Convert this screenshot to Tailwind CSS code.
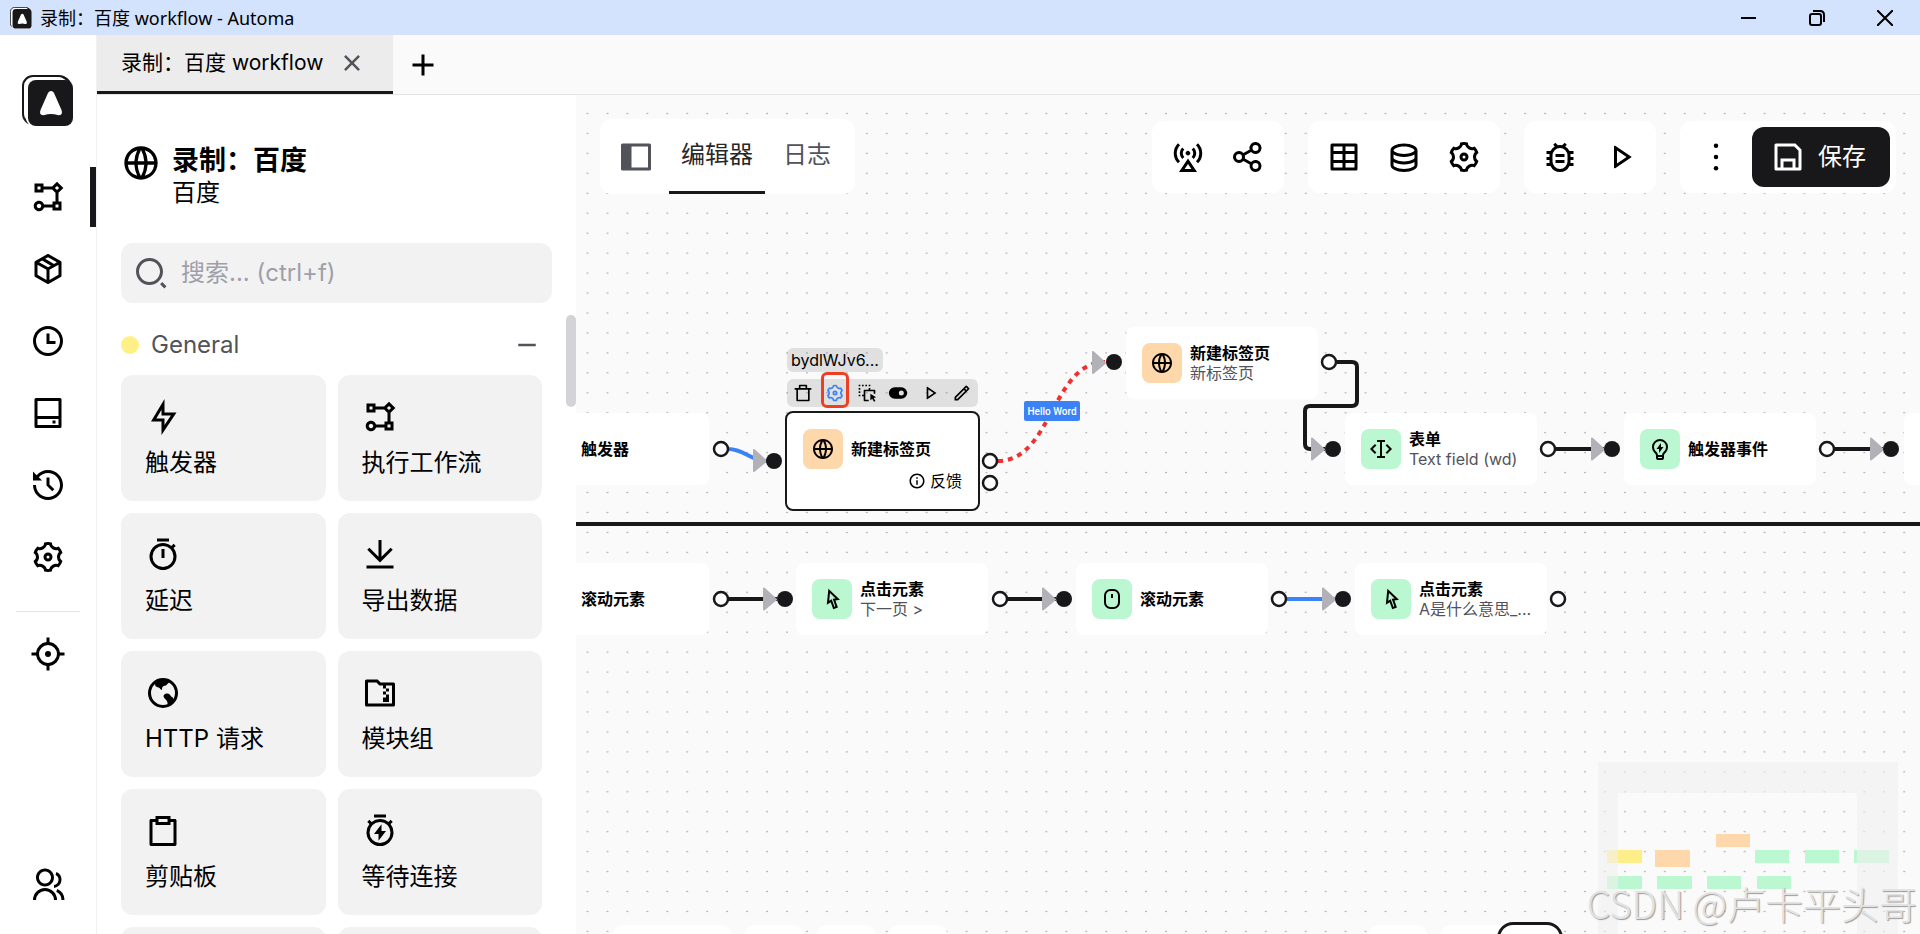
<!DOCTYPE html>
<html lang="zh-CN">
<head>
<meta charset="utf-8">
<title>录制：百度 workflow - Automa</title>
<script src="https://cdn.jsdelivr.net/npm/@tailwindcss/browser@4"></script>
</head>
<body class="h-screen overflow-hidden bg-white text-black font-['Inter','Noto_Sans_CJK_SC',sans-serif] flex flex-col">

<svg class="hidden" aria-hidden="true">
  <symbol id="logo" viewBox="0 0 52 52">
    <rect x="1" y="1" width="46" height="48" rx="10" fill="#fff" stroke="#18181b" stroke-width="2"/>
    <rect x="4" y="4" width="48" height="48" rx="9" fill="#fff"/>
    <path d="M38 1q9 0 11 8z" fill="#18181b"/>
    <rect x="6" y="5" width="45" height="46" rx="8" fill="#18181b"/>
    <path d="M26 18q1-2 3-2t3 2l7.500 17q2 6-4 5-3-1-6.500-1t-6.500 1q-6 1-4-5z" fill="#fff"/>
  </symbol>
  <symbol id="flow" viewBox="0 0 24 24"><path d="M6 21.500c-1.933 0-3.500-1.567-3.500-3.500s1.567-3.500 3.500-3.500c1.585 0 2.924 1.054 3.355 2.500H15v-2h2V9.242L14.757 7H9v2H3V3h6v2h5.757L18 1.757 22.243 6 19 9.241V15h2v6h-6v-2H9.355c-.43 1.446-1.77 2.500-3.355 2.500zm0-5c-.828 0-1.500.672-1.500 1.500s.672 1.500 1.500 1.500 1.500-.672 1.500-1.500-.672-1.500-1.500-1.500zm13 .5h-2v2h2v-2zM18 4.586L16.586 6 18 7.414 19.414 6 18 4.586zM7 5H5v2h2V5z"/></symbol>
  <symbol id="package" viewBox="0 0 24 24"><path d="M21 16.500c0 .38-.21.71-.53.88l-7.900 4.440c-.16.12-.36.18-.57.18s-.41-.06-.57-.18l-7.900-4.440A.99.99 0 013 16.500v-9c0-.38.21-.71.53-.88l7.900-4.440c.16-.12.36-.18.57-.18s.41.060.57.180l7.900 4.440c.32.17.53.5.53.88v9zM12 4.150l-1.890 1.070L16 8.610l1.960-1.110L12 4.150zM6.040 7.500L12 10.850l1.960-1.100-5.880-3.400L6.040 7.500zM5 15.910l6 3.380v-6.710L5 9.210v6.700zm14 0v-6.700l-6 3.370v6.710l6-3.380z"/></symbol>
  <symbol id="clock" viewBox="0 0 24 24"><path d="M12 22C6.477 22 2 17.523 2 12S6.477 2 12 2s10 4.477 10 10-4.477 10-10 10zm0-2a8 8 0 100-16 8 8 0 000 16zm1-8h4v2h-6V7h2v5z"/></symbol>
  <symbol id="drive" viewBox="0 0 24 24"><path d="M5 14h14V4H5v10zm0 2v4h14v-4H5zM4 2h16a1 1 0 011 1v18a1 1 0 01-1 1H4a1 1 0 01-1-1V3a1 1 0 011-1zm11 15h2v2h-2v-2z"/></symbol>
  <symbol id="history" viewBox="0 0 24 24"><path d="M12 2c5.523 0 10 4.477 10 10s-4.477 10-10 10S2 17.523 2 12h2c0 4.418 3.582 8 8 8s8-3.582 8-8-3.582-8-8-8C9.536 4 7.332 5.114 5.865 6.866L8 9H2V3l2.447 2.446C6.280 3.336 8.984 2 12 2zm1 5v4.585l3.243 3.243-1.415 1.415L11 12.413V7h2z"/></symbol>
  <symbol id="gear" viewBox="0 0 24 24"><path d="M3.340 17a10.018 10.018 0 0 1-.978-2.326 3 3 0 0 0 .002-5.347A9.990 9.990 0 0 1 4.865 4.990a3 3 0 0 0 4.631-2.674 9.990 9.990 0 0 1 5.007.002 3 3 0 0 0 4.632 2.672c.579.590 1.093 1.261 1.525 2.010.433.749.757 1.530.978 2.326a3 3 0 0 0-.002 5.347 9.990 9.990 0 0 1-2.501 4.337 3 3 0 0 0-4.631 2.674 9.990 9.990 0 0 1-5.007-.002 3 3 0 0 0-4.632-2.672A10.018 10.018 0 0 1 3.340 17zm5.660.196a4.993 4.993 0 0 1 2.250 2.770c.499.047 1 .048 1.499.001A4.993 4.993 0 0 1 15 17.197a4.993 4.993 0 0 1 3.525-.565c.290-.408.540-.843.748-1.298A4.993 4.993 0 0 1 18 12c0-1.260.470-2.437 1.273-3.334a8.126 8.126 0 0 0-.750-1.298A4.993 4.993 0 0 1 15 6.804a4.993 4.993 0 0 1-2.250-2.770c-.499-.047-1-.048-1.499-.001A4.993 4.993 0 0 1 9 6.803a4.993 4.993 0 0 1-3.525.565 7.990 7.990 0 0 0-.748 1.298A4.993 4.993 0 0 1 6 12c0 1.260-.470 2.437-1.273 3.334a8.126 8.126 0 0 0 .750 1.298A4.993 4.993 0 0 1 9 17.196zM12 15a3 3 0 1 1 0-6 3 3 0 0 1 0 6zm0-2a1 1 0 1 0 0-2 1 1 0 0 0 0 2z"/></symbol>
  <symbol id="focus" viewBox="0 0 24 24"><path d="M13 1l.001 3.062A8.004 8.004 0 0119.938 11H23v2l-3.062.001a8.004 8.004 0 01-6.937 6.937L13 23h-2v-3.062a8.004 8.004 0 01-6.938-6.937L1 13v-2h3.062A8.004 8.004 0 0111 4.062V1h2zm-1 5a6 6 0 100 12 6 6 0 000-12zm0 4a2 2 0 110 4 2 2 0 010-4z"/></symbol>
  <symbol id="group" viewBox="0 0 24 24"><path d="M2 22a8 8 0 1116 0h-2a6 6 0 10-12 0H2zm8-9c-3.315 0-6-2.685-6-6s2.685-6 6-6 6 2.685 6 6-2.685 6-6 6zm0-2c2.210 0 4-1.790 4-4s-1.790-4-4-4-4 1.790-4 4 1.790 4 4 4zm8.284 3.703A8.002 8.002 0 0123 22h-2a6.001 6.001 0 00-3.537-5.473l.820-1.824zm-.688-11.290A5.500 5.500 0 0121 8.500a5.499 5.499 0 01-5 5.478v-2.013a3.500 3.500 0 001.041-6.609l.555-1.943z"/></symbol>
  <symbol id="globe" viewBox="0 0 24 24"><path d="M12 22C6.477 22 2 17.523 2 12S6.477 2 12 2s10 4.477 10 10-4.477 10-10 10zm-2.290-2.333A17.900 17.900 0 018.027 13H4.062a8.008 8.008 0 005.648 6.667zM10.030 13c.151 2.439.848 4.730 1.970 6.752A15.905 15.905 0 0013.970 13h-3.940zm9.908 0h-3.965a17.900 17.900 0 01-1.683 6.667A8.008 8.008 0 0019.938 13zM4.062 11h3.965A17.900 17.900 0 019.710 4.333 8.008 8.008 0 004.062 11zm5.969 0h3.938A15.905 15.905 0 0012 4.248 15.905 15.905 0 0010.030 11zm4.259-6.667A17.900 17.900 0 0115.973 11h3.965a8.008 8.008 0 00-5.648-6.667z"/></symbol>
  <symbol id="search" viewBox="0 0 24 24"><path d="M11 2c4.968 0 9 4.032 9 9s-4.032 9-9 9-9-4.032-9-9 4.032-9 9-9zm0 16c3.867 0 7-3.133 7-7 0-3.868-3.133-7-7-7-3.868 0-7 3.132-7 7 0 3.867 3.132 7 7 7zm8.485.071l2.829 2.828-1.415 1.415-2.828-2.829 1.414-1.414z"/></symbol>
  <symbol id="flash" viewBox="0 0 24 24"><path d="M13 9h8L11 24v-9H4l9-15v9zm-2 2V7.220L7.532 13H13v4.394L17.263 11H11z"/></symbol>
  <symbol id="timer" viewBox="0 0 24 24"><path d="M17.618 5.968l1.453-1.453 1.414 1.414-1.453 1.453a9 9 0 11-1.414-1.414zM12 20a7 7 0 100-14 7 7 0 000 14zM11 8h2v6h-2V8zM8 1h8v2H8V1z"/></symbol>
  <symbol id="download" viewBox="0 0 24 24"><path d="M3 19h18v2H3v-2zm10-5.828L19.071 7.100l1.414 1.414L12 17 3.515 8.515 4.929 7.100 11 13.170V2h2v11.172z"/></symbol>
  <symbol id="earth" viewBox="0 0 24 24"><circle cx="12" cy="12" r="9" fill="none" stroke="currentColor" stroke-width="2"/><path d="M6.500 5.500L12 2.500l4.500 1.300c-.3 1.200-1.300 1.700-2 2.700-.8 1-1.800.5-2.700 1.300-.6.600-.2 1.600-.7 2.200-.7-.2-1-1.300-2-1.700-1-.300-2-.3-2.300-1.300-.2-.6.200-1-.3-1.500zM12.500 13.500c.8-1.300 3-1.500 4-.5.600.6.600 1.200 1.500 1.700.8.500 1.200 1 1 2.300L15 21c0-1.500.3-2.800-.6-4-.8-1.100-2.500-2-1.900-3.500z"/></symbol>
  <symbol id="zip" viewBox="0 0 24 24"><path d="M10.414 3l2 2H21a1 1 0 011 1v14a1 1 0 01-1 1H3a1 1 0 01-1-1V4a1 1 0 011-1h7.414zM18 18h-4v-3h2v-2h-2v-2h2V9h-2V7h-2.414l-2-2H4v14h16V7h-4v2h2v2h-2v2h2v5z"/></symbol>
  <symbol id="clipboard" viewBox="0 0 24 24"><path d="M7 4V2h10v2h3.007c.548 0 .993.445.993.993v16.014a.994.994 0 01-.993.993H3.993A.994.994 0 013 21.007V4.993C3 4.445 3.445 4 3.993 4H7zm0 2H5v14h14V6h-2v2H7V6zm2-2v2h6V4H9z"/></symbol>
  <symbol id="timer-flash" viewBox="0 0 24 24"><path d="M6.382 5.968A8.962 8.962 0 0112 4c2.125 0 4.078.736 5.618 1.968l1.453-1.453 1.414 1.414-1.453 1.453a9 9 0 11-14.064 0L3.515 5.930l1.414-1.414 1.453 1.453zM12 20a7 7 0 100-14 7 7 0 000 14zm1-8h3l-5 6.500V14H8l5-6.505V12zM8 1h8v2H8V1z"/></symbol>
  <symbol id="sidebar" viewBox="0 0 24 24"><path d="M3 3h18a1 1 0 011 1v16a1 1 0 01-1 1H3a1 1 0 01-1-1V4a1 1 0 011-1zm6 2v14h11V5H9z"/></symbol>
  <symbol id="station" viewBox="0 0 24 24"><path d="M12 13l6 9H6l6-9zm0 3.600L9.740 20h4.520L12 16.600zm-1.060-6.040a1.500 1.500 0 112.120-2.120 1.500 1.500 0 01-2.120 2.120zM5.281 2.783l1.415 1.415a7.500 7.500 0 000 10.606l-1.415 1.415a9.500 9.500 0 010-13.436zm13.436 0a9.500 9.500 0 010 13.436l-1.414-1.415a7.500 7.500 0 000-10.606l1.414-1.415zM8.110 5.611l1.414 1.414a3.500 3.500 0 000 4.950l-1.414 1.414a5.500 5.500 0 010-7.778zm7.778 0a5.500 5.500 0 010 7.778l-1.414-1.414a3.500 3.500 0 000-4.950l1.414-1.414z"/></symbol>
  <symbol id="share" viewBox="0 0 24 24"><path d="M13.120 17.023l-4.199-2.290a4 4 0 110-5.465l4.200-2.290a4 4 0 11.959 1.755l-4.200 2.290a4.008 4.008 0 010 1.954l4.199 2.290a4 4 0 11-.959 1.755zM6 14a2 2 0 100-4 2 2 0 000 4zm11-6a2 2 0 100-4 2 2 0 000 4zm0 12a2 2 0 100-4 2 2 0 000 4z"/></symbol>
  <symbol id="table" viewBox="0 0 24 24"><path d="M13 10v4h6v-4h-6zm-2 0H5v4h6v-4zm2 9h6v-3h-6v3zm-2 0v-3H5v3h6zm2-14v3h6V5h-6zm-2 0H5v3h6V5zM4 3h16a1 1 0 011 1v16a1 1 0 01-1 1H4a1 1 0 01-1-1V4a1 1 0 011-1z"/></symbol>
  <symbol id="database" viewBox="0 0 24 24"><path d="M5 12.500c0 .313.461.858 1.530 1.393C7.914 14.585 9.877 15 12 15c2.123 0 4.086-.415 5.470-1.107 1.069-.535 1.530-1.080 1.530-1.393v-2.171C17.350 11.349 14.827 12 12 12s-5.350-.652-7-1.671V12.500zm14 2.829C17.350 16.349 14.827 17 12 17s-5.350-.652-7-1.671V17.500c0 .313.461.858 1.530 1.393C7.914 19.585 9.877 20 12 20c2.123 0 4.086-.415 5.470-1.107 1.069-.535 1.530-1.080 1.530-1.393v-2.171zM3 17.500v-10C3 5.015 7.030 3 12 3s9 2.015 9 4.500v10c0 2.485-4.030 4.500-9 4.500s-9-2.015-9-4.500zm9-7.500c2.123 0 4.086-.415 5.470-1.107C18.539 8.358 19 7.813 19 7.500c0-.313-.461-.858-1.530-1.393C16.086 5.415 14.123 5 12 5c-2.123 0-4.086.415-5.470 1.107C5.461 6.642 5 7.187 5 7.500c0 .313.461.858 1.530 1.393C7.914 9.585 9.877 10 12 10z"/></symbol>
  <symbol id="bug" viewBox="0 0 24 24"><path d="M10.562 4.148a7.030 7.030 0 012.876 0l1.683-1.684 1.415 1.415-1.050 1.050A7.030 7.030 0 0118.326 8H21v2h-2.070c.046.327.070.660.070 1v1h2v2h-2v1c0 .340-.024.673-.070 1H21v2h-2.674a7 7 0 01-12.652 0H3v-2h2.070A7.060 7.060 0 015 15v-1H3v-2h2v-1c0-.340.024-.673.070-1H3V8h2.674a7.030 7.030 0 012.840-3.072l-1.050-1.050L8.880 2.465l1.683 1.684zM12 6a5 5 0 00-5 5v4a5 5 0 0010 0v-4a5 5 0 00-5-5zm-3 8h6v2H9v-2zm0-4h6v2H9v-2z"/></symbol>
  <symbol id="play" viewBox="0 0 24 24"><path d="M16.394 12L10 7.737v8.526L16.394 12zm2.982.416L8.777 19.482A.5.5 0 018 19.066V4.934a.5.5 0 01.777-.416l10.599 7.066a.5.5 0 010 .832z"/></symbol>
  <symbol id="more" viewBox="0 0 24 24"><circle cx="12" cy="4.500" r="1.500"/><circle cx="12" cy="12" r="1.500"/><circle cx="12" cy="19.500" r="1.500"/></symbol>
  <symbol id="save" viewBox="0 0 24 24"><path d="M7 19v-6h10v6h2V7.828L16.172 5H5v14h2zM4 3h13l4 4v13a1 1 0 01-1 1H4a1 1 0 01-1-1V4a1 1 0 011-1zm5 12v4h6v-4H9z"/></symbol>
  <symbol id="trash" viewBox="0 0 24 24"><path d="M7 6V3a1 1 0 011-1h8a1 1 0 011 1v3h5v2h-2v13a1 1 0 01-1 1H5a1 1 0 01-1-1V8H2V6h5zm11 2H6v12h12V8zM9 4v2h6V4H9z"/></symbol>
  <symbol id="drag" viewBox="0 0 24 24"><path d="M16 13l6.964 4.062-2.973.850 2.125 3.681-1.732 1-2.125-3.680-2.223 2.150L16 13zm-2-7h2v2h5a1 1 0 011 1v4h-2v-3H10v10h4v2H9a1 1 0 01-1-1v-5H6v-2h2V9a1 1 0 011-1h5V6zM4 14v2H2v-2h2zm0-4v2H2v-2h2zm0-4v2H2V6h2zm0-4v2H2V2h2zm4 0v2H6V2h2zm4 0v2h-2V2h2zm4 0v2h-2V2h2z"/></symbol>
  <symbol id="toggle" viewBox="0 0 24 24"><path d="M8 5h8a7 7 0 010 14H8A7 7 0 018 5zm8 10a3 3 0 100-6 3 3 0 000 6z"/></symbol>
  <symbol id="pencil" viewBox="0 0 24 24"><path d="M15.728 9.686l-1.414-1.414L5 17.586V19h1.414l9.314-9.314zm1.414-1.414l1.414-1.414-1.414-1.414-1.414 1.414 1.414 1.414zM7.242 21H3v-4.243L16.435 3.322a1 1 0 011.414 0l2.829 2.829a1 1 0 010 1.414L7.243 21z"/></symbol>
  <symbol id="info" viewBox="0 0 24 24"><path d="M12 22C6.477 22 2 17.523 2 12S6.477 2 12 2s10 4.477 10 10-4.477 10-10 10zm0-2a8 8 0 100-16 8 8 0 000 16zM11 7h2v2h-2V7zm0 4h2v6h-2v-6z"/></symbol>
  <symbol id="input" viewBox="0 0 24 24"><path d="M8 21v-2h3V5H8V3h8v2h-3v14h3v2H8zM18.050 7.050L23 12l-4.950 4.950-1.414-1.414L20.172 12l-3.536-3.536L18.050 7.050zm-12.100 0l1.414 1.414L3.828 12l3.536 3.536L5.950 16.950 1 12l4.950-4.950z"/></symbol>
  <symbol id="bulb" viewBox="0 0 24 24"><path d="M9.973 18h4.054c.132-1.202.745-2.194 1.740-3.277.113-.122.832-.867.917-.973a6 6 0 10-9.370-.002c.086.107.807.853.918.974.996 1.084 1.609 2.076 1.741 3.278zM14 20h-4v1h4v-1zm-8.246-5a8 8 0 1112.490.002C17.624 15.774 16 17 16 18.500V21a2 2 0 01-2 2h-4a2 2 0 01-2-2v-2.500C8 17 6.375 15.774 5.754 15zM13 10.005h2.500l-4.500 6v-4H8.500L13 6v4.005z"/></symbol>
  <symbol id="cursor" viewBox="0 0 24 24"><path d="M15.388 13.498l2.552 7.014-4.698 1.710-2.553-7.014-3.899 2.445L8.410 1.633l11.537 11.232-4.558.633zm-.011 5.818l-2.715-7.460 2.960-.410-5.640-5.490-.790 7.830 2.530-1.587 2.715 7.460.940-.343z"/></symbol>
  <symbol id="mouse" viewBox="0 0 24 24"><rect x="5" y="3" width="14" height="18" rx="5.500" fill="none" stroke="currentColor" stroke-width="2"/><path d="M11 7h2v4h-2z"/></symbol>
  <symbol id="close" viewBox="0 0 24 24"><path d="M12 10.586l4.950-4.950 1.414 1.414-4.950 4.950 4.950 4.950-1.414 1.414-4.950-4.950-4.950 4.950-1.414-1.414 4.950-4.950-4.950-4.950L7.050 5.636z"/></symbol>
  <symbol id="add" viewBox="0 0 24 24"><path d="M11 11V5h2v6h6v2h-6v6h-2v-6H5v-2z"/></symbol>
  <symbol id="subtract" viewBox="0 0 24 24"><path d="M5 11h14v2H5z"/></symbol>
</svg>

<!-- Window title bar -->
<header class="flex h-[35px] shrink-0 items-center bg-[#d3e2fd] pl-2.5">
  <svg class="size-[22px]"><use href="#logo"/></svg>
  <h1 class="ml-2 flex-1 text-[18px] leading-6 font-['Noto_Sans','Noto_Sans_CJK_SC',sans-serif]">录制：百度 workflow - Automa</h1>
  <div class="flex pr-px">
    <button aria-label="最小化" class="flex h-[35px] w-[68px] items-center justify-center"><svg class="size-4" viewBox="0 0 16 16" fill="none" stroke="currentColor" stroke-width="2"><path d="M0 8h15"/></svg></button>
    <button aria-label="还原" class="flex h-[35px] w-[68px] items-center justify-center"><svg class="size-4" viewBox="0 0 16 16" fill="none" stroke="currentColor" stroke-width="2"><rect x="1" y="4" width="11" height="11" rx="2"/><path d="M4 1h7q4 0 4 4v7"/></svg></button>
    <button aria-label="关闭" class="flex h-[35px] w-[68px] items-center justify-center"><svg class="size-4" viewBox="0 0 16 16" fill="none" stroke="currentColor" stroke-width="2"><path d="M0 0l16 16M16 0L0 16"/></svg></button>
  </div>
</header>

<div class="flex min-h-0 flex-1">
  <!-- Main navigation -->
  <nav class="flex w-[97px] shrink-0 flex-col items-center border-r border-[#f2f2f2] pt-10">
    <a href="#" aria-label="Automa" class="mb-10"><svg class="size-[52px]"><use href="#logo"/></svg></a>
    <div class="flex w-full flex-col gap-3">
      <a href="#" aria-label="工作流" class="flex h-[60px] items-center justify-center border-r-[6px] border-[#18181b] pl-1.5"><svg class="size-9 fill-current"><use href="#flow"/></svg></a>
      <a href="#" aria-label="包" class="flex h-[60px] items-center justify-center"><svg class="size-9 fill-current"><use href="#package"/></svg></a>
      <a href="#" aria-label="定时" class="flex h-[60px] items-center justify-center"><svg class="size-9 fill-current"><use href="#clock"/></svg></a>
      <a href="#" aria-label="存储" class="flex h-[60px] items-center justify-center"><svg class="size-9 fill-current"><use href="#drive"/></svg></a>
      <a href="#" aria-label="日志" class="flex h-[60px] items-center justify-center"><svg class="size-9 fill-current"><use href="#history"/></svg></a>
      <a href="#" aria-label="设置" class="flex h-[60px] items-center justify-center"><svg class="size-9 fill-current"><use href="#gear"/></svg></a>
    </div>
    <hr class="mt-6 mb-3 w-16 border-[#e4e4e7]">
    <button aria-label="元素选择器" class="flex h-[60px] items-center justify-center"><svg class="size-9 fill-current"><use href="#focus"/></svg></button>
    <a href="#" aria-label="团队" class="mt-auto mb-[31px] flex"><svg class="size-9 fill-current"><use href="#group"/></svg></a>
  </nav>

  <div class="flex min-w-0 flex-1 flex-col">
    <!-- Workflow tabs -->
    <div class="flex h-[60px] shrink-0 border-b border-[#e4e4e7] bg-[#fafafa]">
      <div class="flex items-center border-b-[3px] border-[#18181b] bg-[#ececec] pr-[26px] pl-6">
        <a href="#" class="text-[21px] leading-8">录制：百度 workflow</a>
        <button aria-label="关闭标签页" class="ml-3.5 text-[#52525b]"><svg class="size-[30px] fill-current"><use href="#close"/></svg></button>
      </div>
      <button aria-label="新建" class="ml-3"><svg class="size-9 fill-current"><use href="#add"/></svg></button>
    </div>

    <div class="flex min-h-0 flex-1">
      <!-- Block list -->
      <aside class="flex w-[479px] shrink-0 flex-col overflow-hidden bg-white">
        <div class="flex px-6 pt-12">
          <svg class="size-10 shrink-0 fill-current"><use href="#globe"/></svg>
          <div class="ml-[11px]">
            <h2 class="text-[27px] leading-9 font-bold">录制：百度</h2>
            <p class="text-2xl leading-7">百度</p>
          </div>
        </div>
        <label class="mx-6 mt-9 flex h-[60px] shrink-0 items-center rounded-xl bg-[#f2f2f2] px-3">
          <svg class="size-9 shrink-0 fill-[#52525b]"><use href="#search"/></svg>
          <input type="text" aria-label="搜索" placeholder="搜索... (ctrl+f)" class="ml-3 min-w-0 flex-1 bg-transparent text-2xl outline-none placeholder:text-[#9f9fa9]">
        </label>
        <div class="relative mt-3 min-h-0 flex-1 overflow-hidden pr-[34px] pl-6">
          <div class="absolute top-0 right-0 h-[92px] w-2.5 rounded-full bg-[#d4d4d8]"></div>
          <button class="flex h-[60px] w-full items-center text-[#52525b]">
            <span class="size-[18px] rounded-full bg-yellow-200"></span>
            <span class="ml-3 flex-1 text-left text-2xl">General</span>
            <svg class="size-[30px] fill-current"><use href="#subtract"/></svg>
          </button>
          <ul class="grid grid-cols-2 gap-3 text-2xl leading-9">
            <li class="h-[126px] rounded-xl bg-[#f2f2f2] p-6"><svg class="mb-2.5 size-9 fill-current"><use href="#flash"/></svg>触发器</li>
            <li class="h-[126px] rounded-xl bg-[#f2f2f2] p-6"><svg class="mb-2.5 size-9 fill-current"><use href="#flow"/></svg>执行工作流</li>
            <li class="h-[126px] rounded-xl bg-[#f2f2f2] p-6"><svg class="mb-2.5 size-9 fill-current"><use href="#timer"/></svg>延迟</li>
            <li class="h-[126px] rounded-xl bg-[#f2f2f2] p-6"><svg class="mb-2.5 size-9 fill-current"><use href="#download"/></svg>导出数据</li>
            <li class="h-[126px] rounded-xl bg-[#f2f2f2] p-6"><svg class="mb-2.5 size-9 fill-current"><use href="#earth"/></svg>HTTP 请求</li>
            <li class="h-[126px] rounded-xl bg-[#f2f2f2] p-6"><svg class="mb-2.5 size-9 fill-current"><use href="#zip"/></svg>模块组</li>
            <li class="h-[126px] rounded-xl bg-[#f2f2f2] p-6"><svg class="mb-2.5 size-9 fill-current"><use href="#clipboard"/></svg>剪贴板</li>
            <li class="h-[126px] rounded-xl bg-[#f2f2f2] p-6"><svg class="mb-2.5 size-9 fill-current"><use href="#timer-flash"/></svg>等待连接</li>
            <li class="h-[126px] rounded-xl bg-[#f2f2f2]"></li>
            <li class="h-[126px] rounded-xl bg-[#f2f2f2]"></li>
          </ul>
        </div>
      </aside>

      <!-- Editor canvas -->
      <main class="relative min-w-0 flex-1 overflow-hidden bg-[#fafafa]">
        <svg class="absolute inset-0 size-full" fill="none">
          <defs>
            <pattern id="dots" x="1.500" y="8" width="19.950" height="19.950" patternUnits="userSpaceOnUse"><circle cx="10" cy="10.500" r=".7" fill="#8a8a90"/></pattern>
          </defs>
          <rect width="100%" height="100%" fill="url(#dots)"/>
          <!-- Edges, in window coordinates -->
          <g transform="translate(-576 -95)" stroke-width="4">
            <path d="M576 524H4000" stroke="#18181b"/>
            <path d="M728 449C745 449 750 461 767 461" stroke="#3b82f6"/>
            <path d="M998 461C1052 461 1052 362 1105 362" stroke="#ef3131" stroke-dasharray="5 5"/>
            <path d="M1337 362H1352q5 0 5 5V401q0 5-5 5H1310q-5 0-5 5V444q0 5 5 5H1325" stroke="#18181b"/>
            <path d="M1556 449H1604M1835 449H1883M728 599H777M1007 599H1056" stroke="#18181b"/>
            <path d="M1287 599H1335" stroke="#3b82f6"/>
            <g fill="#b1b1b7" stroke="#b1b1b7" stroke-width="2" stroke-linejoin="round">
              <path d="M754 450v21l12-10zM1093 352v21l12-10zM1312 438.500v21l12-10zM1592 438.500v21l12-10zM1871 438.500v21l12-10zM764 588.500v21l12-10zM1043 588.500v21l12-10zM1323 588.500v21l12-10z"/>
            </g>
            <g fill="#18181b">
              <circle cx="774" cy="461" r="8"/><circle cx="1114" cy="362" r="8"/><circle cx="1333" cy="449" r="8"/><circle cx="1612" cy="449" r="8"/><circle cx="1891" cy="449" r="8"/>
              <circle cx="785" cy="599" r="8"/><circle cx="1064" cy="599" r="8"/><circle cx="1343" cy="599" r="8"/>
            </g>
            <g fill="#fff" stroke="#18181b" stroke-width="2.500">
              <circle cx="721" cy="449" r="7"/><circle cx="990" cy="461" r="7"/><circle cx="990" cy="483" r="7"/><circle cx="1329" cy="362" r="7"/><circle cx="1548" cy="449" r="7"/><circle cx="1827" cy="449" r="7"/>
              <circle cx="721" cy="599" r="7"/><circle cx="1000" cy="599" r="7"/><circle cx="1279" cy="599" r="7"/><circle cx="1558" cy="599" r="7"/>
            </g>
          </g>
        </svg>
        <span class="absolute top-[306px] left-[448px] flex h-5 w-14 items-center justify-center rounded-xs bg-[#3b82f6] text-[10px] font-medium whitespace-nowrap text-white font-['Roboto',sans-serif]">Hello Word</span>

        <!-- Nodes -->
        <div class="text-base leading-5">
          <div class="absolute top-[318px] left-[-59px] flex h-[72px] w-48 items-center gap-2 rounded-lg bg-white px-4"><span class="size-10 shrink-0 rounded-lg bg-yellow-200"></span><b>触发器</b></div>

          <span class="absolute top-[253px] left-[211px] h-6 rounded-md bg-black/10 px-1 leading-6">bydlWJv6...</span>
          <div class="absolute top-[284px] left-[211px] flex h-7 w-[191px] items-center justify-between rounded-md bg-black/10 px-1.5">
            <button aria-label="删除"><svg class="size-5 fill-current"><use href="#trash"/></svg></button>
            <button aria-label="设置" class="text-[#3b82f6]"><svg class="size-5 fill-current"><use href="#gear"/></svg></button>
            <button aria-label="拖放"><svg class="size-5 fill-current"><use href="#drag"/></svg></button>
            <button aria-label="启用"><svg class="size-5 fill-current"><use href="#toggle"/></svg></button>
            <button aria-label="运行"><svg class="size-5 fill-current"><use href="#play"/></svg></button>
            <button aria-label="编辑"><svg class="size-5 fill-current"><use href="#pencil"/></svg></button>
          </div>
          <div class="absolute top-[277px] left-[245px] h-9 w-7 rounded-md border-[3px] border-[#ee3f25]"></div>
          <div class="absolute top-[316px] left-[209px] h-[100px] w-[195px] rounded-lg border-2 border-[#18181b] bg-white px-4 pt-4">
            <div class="flex items-center gap-2"><span class="flex size-10 shrink-0 items-center justify-center rounded-lg bg-[#fed7aa]"><svg class="size-6 fill-current"><use href="#globe"/></svg></span><b>新建标签页</b></div>
            <p class="mt-0.5 flex items-center justify-end gap-1"><svg class="size-[18px] fill-current"><use href="#info"/></svg>反馈</p>
          </div>

          <div class="absolute top-[232px] left-[550px] flex h-[72px] w-48 items-center gap-2 rounded-lg bg-white px-4"><span class="flex size-10 shrink-0 items-center justify-center rounded-lg bg-[#fed7aa]"><svg class="size-6 fill-current"><use href="#globe"/></svg></span><div><b>新建标签页</b><p class="text-[#52525b]">新标签页</p></div></div>
          <div class="absolute top-[318px] left-[769px] flex h-[72px] w-48 items-center gap-2 rounded-lg bg-white px-4"><span class="flex size-10 shrink-0 items-center justify-center rounded-lg bg-[#bbf7d0]"><svg class="size-6 fill-current"><use href="#input"/></svg></span><div><b>表单</b><p class="whitespace-nowrap text-[#52525b]">Text field (wd)</p></div></div>
          <div class="absolute top-[318px] left-[1048px] flex h-[72px] w-48 items-center gap-2 rounded-lg bg-white px-4"><span class="flex size-10 shrink-0 items-center justify-center rounded-lg bg-[#bbf7d0]"><svg class="size-6 fill-current"><use href="#bulb"/></svg></span><b>触发器事件</b></div>
          <div class="absolute top-[318px] left-[1328px] flex h-[72px] w-48 items-center rounded-lg bg-white px-4"><span class="size-10 rounded-lg bg-[#bbf7d0]"></span></div>

          <div class="absolute top-[468px] left-[-59px] flex h-[72px] w-48 items-center gap-2 rounded-lg bg-white px-4"><span class="size-10 shrink-0 rounded-lg bg-[#bbf7d0]"></span><b>滚动元素</b></div>
          <div class="absolute top-[468px] left-[220px] flex h-[72px] w-48 items-center gap-2 rounded-lg bg-white px-4"><span class="flex size-10 shrink-0 items-center justify-center rounded-lg bg-[#bbf7d0]"><svg class="size-6 fill-current"><use href="#cursor"/></svg></span><div><b>点击元素</b><p class="text-[#52525b]">下一页 &gt;</p></div></div>
          <div class="absolute top-[468px] left-[500px] flex h-[72px] w-48 items-center gap-2 rounded-lg bg-white px-4"><span class="flex size-10 shrink-0 items-center justify-center rounded-lg bg-[#bbf7d0]"><svg class="size-6 fill-current"><use href="#mouse"/></svg></span><b>滚动元素</b></div>
          <div class="absolute top-[468px] left-[779px] flex h-[72px] w-48 items-center gap-2 rounded-lg bg-white px-4"><span class="flex size-10 shrink-0 items-center justify-center rounded-lg bg-[#bbf7d0]"><svg class="size-6 fill-current"><use href="#cursor"/></svg></span><div><b>点击元素</b><p class="whitespace-nowrap text-[#52525b]">A是什么意思_...</p></div></div>
        </div>

        <!-- Editor toolbar -->
        <div class="relative flex items-center gap-6 px-6 pt-6">
          <div class="mr-auto flex h-[75px] items-stretch rounded-xl bg-white pr-3 pl-[18px] text-2xl">
            <button aria-label="切换侧栏" class="mr-[15px] text-[#52525b]"><svg class="size-9 fill-current"><use href="#sidebar"/></svg></button>
            <button class="mr-1.5 border-b-[3px] border-[#18181b] px-3 text-[#27272a]">编辑器</button>
            <button class="border-b-[3px] border-transparent px-3 text-[#52525b]">日志</button>
          </div>
          <div class="flex h-[72px] rounded-xl bg-white p-1.5">
            <button aria-label="托管" class="flex size-[60px] items-center justify-center"><svg class="size-9 fill-current"><use href="#station"/></svg></button>
            <button aria-label="分享" class="flex size-[60px] items-center justify-center"><svg class="size-9 fill-current"><use href="#share"/></svg></button>
          </div>
          <div class="flex h-[72px] rounded-xl bg-white p-1.5">
            <button aria-label="表格" class="flex size-[60px] items-center justify-center"><svg class="size-9 fill-current"><use href="#table"/></svg></button>
            <button aria-label="全局数据" class="flex size-[60px] items-center justify-center"><svg class="size-9 fill-current"><use href="#database"/></svg></button>
            <button aria-label="设置" class="flex size-[60px] items-center justify-center"><svg class="size-9 fill-current"><use href="#gear"/></svg></button>
          </div>
          <div class="flex h-[72px] rounded-xl bg-white p-1.5">
            <button aria-label="调试" class="flex size-[60px] items-center justify-center"><svg class="size-9 fill-current"><use href="#bug"/></svg></button>
            <button aria-label="执行" class="flex size-[60px] items-center justify-center"><svg class="size-9 fill-current"><use href="#play"/></svg></button>
          </div>
          <div class="flex h-[72px] rounded-xl bg-white p-1.5">
            <button aria-label="更多" class="flex size-[60px] items-center justify-center"><svg class="size-9 fill-current"><use href="#more"/></svg></button>
            <button class="ml-1.5 flex h-[60px] items-center gap-3 rounded-xl bg-[#18181b] pr-6 pl-[18px] text-2xl text-white"><svg class="size-9 fill-current"><use href="#save"/></svg>保存</button>
          </div>
        </div>

        <!-- Minimap -->
        <svg class="absolute right-[22px] -bottom-7 h-[200px] w-[300px]" viewBox="0 0 300 200">
          <g fill="#bbf7d0">
            <rect x="9" y="88" width="35" height="13" fill="#feee8a"/>
            <rect x="57" y="88" width="35" height="17" fill="#fed7aa"/>
            <rect x="118" y="72" width="34" height="13" fill="#fed7aa"/>
            <rect x="157" y="88" width="34" height="13"/><rect x="207" y="88" width="34" height="13"/><rect x="256" y="88" width="35" height="13"/>
            <rect x="9" y="114" width="35" height="13"/><rect x="59" y="114" width="35" height="13"/><rect x="109" y="114" width="34" height="13"/><rect x="159" y="114" width="34" height="13"/>
          </g>
          <path d="M0 0h300v200H0zM20 31v169h239V31z" fill="#f0f0f0" fill-opacity=".6" fill-rule="evenodd"/>
        </svg>

        <!-- Bottom controls -->
        <div class="absolute inset-x-9 -bottom-[51px] flex h-[60px] gap-3">
          <div class="w-[120px] rounded-xl bg-white"></div>
          <div class="w-[60px] rounded-xl bg-white"></div>
          <div class="w-[60px] rounded-xl bg-white"></div>
          <div class="mr-auto w-[60px] rounded-xl bg-white"></div>
          <div class="w-[60px] rounded-xl bg-white"></div>
          <div class="relative mr-[324px] w-[120px] rounded-xl bg-white"><div class="absolute -top-[3px] -right-[3px] h-[66px] w-[66px] rounded-2xl border-[3px] border-[#18181b] bg-white"></div></div>
        </div>

        <p class="absolute right-[3px] bottom-[7px] text-[38px] leading-[48px] whitespace-nowrap text-[#e2e2e2] font-['Noto_Sans_CJK_SC',sans-serif] font-light [text-shadow:1px_1px_1px_#999]">CSDN @卢卡平头哥</p>
      </main>
    </div>
  </div>
</div>
</body>
</html>
